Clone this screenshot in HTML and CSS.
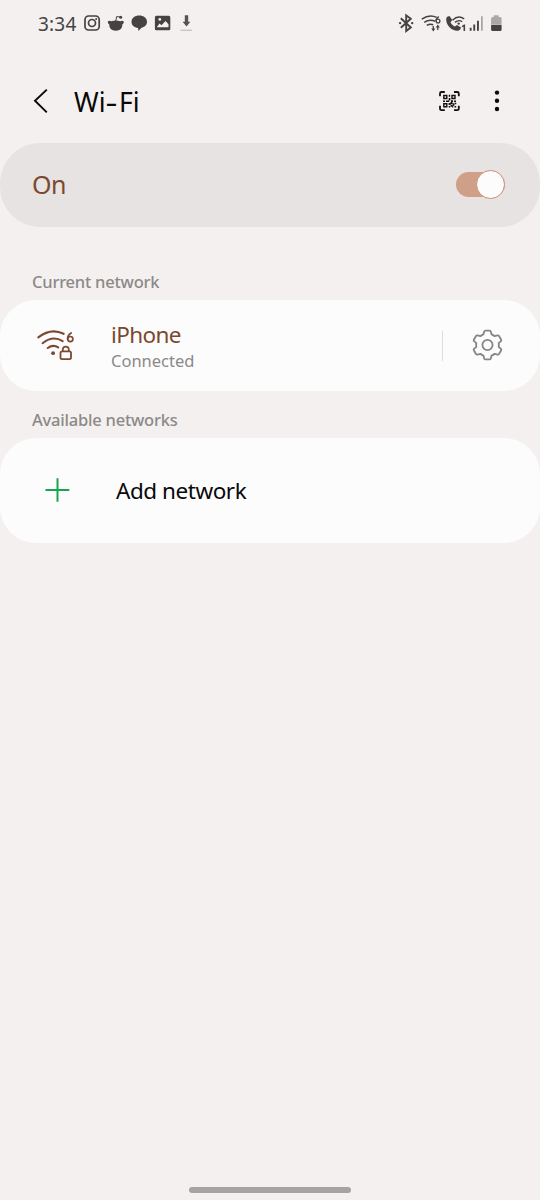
FILE: index.html
```html
<!DOCTYPE html>
<html lang="en">
<head>
<meta charset="utf-8">
<title>Wi-Fi</title>
<link rel="stylesheet" href="styles.css">
</head>
<body>
<div class="screen">
  <div class="status">
    <div class="status-left">
      <span class="clock">3:34</span>
      <svg class="notifications" width="110" height="22" viewBox="82 12 110 22">
        <g fill="none" stroke="#444341" stroke-width="1.7">
          <rect x="85" y="16" width="14.2" height="14" rx="3.6"/>
          <circle cx="92" cy="23" r="3.5"/>
        </g>
        <circle cx="96.2" cy="18.9" r="1" fill="#444341"/>
        <g fill="#444341">
          <path d="M107.8 22.6q-.3-1.8 1.6-1.9 1.2 0 1.9.6 4.5-1.6 9 0 .7-.6 1.9-.6 1.9.1 1.6 1.9-.2 1-1.4 1.6.1 6.5-6.6 6.5t-6.6-6.5q-1.2-.6-1.4-1.6z"/>
          <circle cx="120.7" cy="17.2" r="1.5"/>
          <path d="M115.8 21L116.6 16.6L120.5 17" fill="none" stroke="#444341" stroke-width="1"/>
          <path d="M139.2 15.5c4.5 0 7.8 2.7 7.8 6.3 0 3.3-2.4 5.5-5.8 6.1l-2.7 3-.4-2.9c-4-.3-6.6-2.8-6.6-6.2 0-3.6 3.2-6.3 7.7-6.3z"/>
          <path fill-rule="evenodd" d="M156.4 15.8h12.4a1.5 1.5 0 0 1 1.5 1.5v11.4a1.5 1.5 0 0 1-1.5 1.5h-12.4a1.5 1.5 0 0 1-1.5-1.5V17.3a1.5 1.5 0 0 1 1.5-1.5zM156.8 27.2h11.7v-3l-3-3.2-4 4.2-2-1.8zM159.8 18a1.4 1.4 0 1 0 0 2.8 1.4 1.4 0 0 0 0-2.8z"/>
          <path d="M184.8 15.2h3.4v6.6h2.2l-3.9 4.7-3.9-4.7h2.2z" fill="#555452"/>
          <path d="M180.6 29.6h11.4v1.3h-11.4z" fill="#c5c2c1"/>
        </g>
      </svg>
    </div>
    <svg class="indicators" width="108" height="22" viewBox="396 12 108 22">
      <g fill="none" stroke="#444341" stroke-width="1.9">
        <path d="M400.8 18.3L410.8 27.5L406.2 31V15.3L410.8 18.8L400.8 27.8"/>
        <path d="M421.8 19.2Q429.5 13.8 436.6 17.4M424.2 22.4Q429.8 18.7 435.4 21.4M426.8 25.4Q430 23.4 433.2 24.8" stroke-width="1.6"/>
        <path d="M438.8 16.6Q435.9 18.3 436.1 21M433.3 26v4M437.8 30v-4" stroke-width="1.3"/>
        <circle cx="438" cy="21" r="1.9" stroke-width="1.3"/>
        <path d="M452.5 20.2Q458.3 14.5 464.2 18.9M455 22.4Q458.7 19.2 462.2 21.7" stroke-width="1.4"/>
      </g>
      <g fill="#444341">
        <circle cx="400.1" cy="23.1" r="1.2"/><circle cx="412.2" cy="23.1" r="1.2"/>
        <path d="M431.2 28.4h4.2l-2.1 3zM435.7 27.5h4.2l-2.1-3z"/>
        <path d="M447.2 16.7l2.3-.6 2.8 4-1.8 2.2c1 2 2.5 3.4 4.3 4.3l2.2-1.7 4 2.7c-.3 2-1.6 3.3-3.7 3.2-6.1-.4-10.7-5-11.1-11 0-1.4.3-2.4 1-3.1z"/>
        <circle cx="458.7" cy="23.6" r="1.2"/>
        <path d="M461.9 25.9l2-1.4h1.2v6.4h-1.6V26.6l-1.6.9z"/>
        <path d="M469.7 27.7h1.9v3h-1.9zM473.3 24.5h1.9v6.2h-1.9zM477 20.7h1.9v10H477z"/>
        <path d="M481 16.3h1.8v14.4H481z" fill="#aaa8a6"/>
        <path d="M493.8 15.2h4.8v1.9h1.5q1.5 0 1.5 1.5v5.7h-10.5v-5.7q0-1.5 1.5-1.5h1.2z" fill="#aaa8a6"/>
        <path d="M491.1 24.8h10.5v4.7q0 1.5-1.5 1.5h-7.5q-1.5 0-1.5-1.5z"/>
      </g>
    </svg>
  </div>

  <header class="header">
    <svg class="back" width="20" height="30" viewBox="0 0 20 30"><path d="M14.8 3.6L3 14.8L14.8 26.4" fill="none" stroke="#090909" stroke-width="1.9"/></svg>
    <h1 class="title">Wi<span class="hyphen">-</span>Fi</h1>
    <svg class="qr" width="22" height="22" viewBox="438 89 22 22">
      <g fill="none" stroke="#111">
        <path d="M440 95.2V92.5Q440 91 441.5 91H444.8M454 91h3.3q1.5 0 1.5 1.5v2.7M458.8 104.8v2.9q0 1.5-1.5 1.5H454M444.8 109.2h-3.3q-1.5 0-1.5-1.5v-2.9" stroke-width="1.8"/>
        <path d="M443.8 94.5h3v3h-3zM452 94.5h3v3h-3zM443.8 102.7h3v3h-3z" stroke-width="1.4"/>
      </g>
      <path fill="#111" d="M448.7 93.8h1.5v2h-1.5zM448.7 97h1.7v2.4h-1.7zM443 99.4h2v1.5h-2zM446 99.4h3.2v1.5H446zM451 99.3h2v1.7h-2zM454 99.4h2v1.5h-2zM448.6 102h2v2h-2zM450.5 101h2v2h-2zM452.7 102.2h1.7v2.5h-1.7zM454.8 101.8h1.5v1.5h-1.5zM450.6 103.8h2v2h-2zM448.7 105h1.5v1.5h-1.5zM454.5 105h1.7v1.6h-1.7zM452 105.3h1.3v1.3H452z"/>
    </svg>
    <svg class="more" width="8" height="24" viewBox="0 0 8 24"><g fill="#090909"><circle cx="4" cy="3.6" r="2.2"/><circle cx="4" cy="11.8" r="2.2"/><circle cx="4" cy="20" r="2.2"/></g></svg>
  </header>

  <section class="master">
    <span class="master-label">On</span>
    <span class="switch"><span class="thumb"></span></span>
  </section>

  <h2 class="section current">Current network</h2>
  <section class="card network">
    <svg class="wifi" width="40" height="34" viewBox="36 329 40 34">
      <g fill="none" stroke="#7b4830" stroke-width="2.1" stroke-linecap="round">
        <path d="M38.3 337.4Q51 327.5 63.6 333.8M42.6 343.2Q53 335 62.6 341.2M47.8 348Q53 344 58.2 347.4"/>
        <path d="M71.2 333Q67.6 335.2 67.6 338.8" stroke-width="1.7"/>
        <circle cx="70.3" cy="339.1" r="2.6" stroke-width="1.7"/>
        <rect x="60.5" y="351.3" width="10.5" height="7.9" rx="1.6" stroke-width="1.8"/>
        <path d="M62.8 351v-1.4a3 3 0 0 1 6 0v1.4" stroke-width="1.7"/>
      </g>
      <circle cx="53.1" cy="353.2" r="1.9" fill="#7b4830"/>
    </svg>
    <div class="network-text">
      <div class="name">iPhone</div>
      <div class="state">Connected</div>
    </div>
    <span class="divider"></span>
    <svg class="gear" width="34" height="34" viewBox="-16.5 -16 34 34">
      <g fill="none" stroke="#858585" stroke-width="1.8" stroke-linejoin="round">
        <path d="M-4.1-10.6L-3.3-13.5Q-3-14.4-2-14.4H2Q3-14.4 3.3-13.5L4.1-10.6Q5.7-10 7.1-8.8L10-9.6Q11-9.8 11.5-9L13.7-5.2Q14.1-4.4 13.4-3.8L11.2-1.8Q11.5 0 11.2 1.8L13.4 3.8Q14.1 4.4 13.7 5.2L11.5 9Q11 9.8 10 9.6L7.1 8.8Q5.7 10 4.1 10.6L3.3 13.5Q3 14.4 2 14.4H-2Q-3 14.4-3.3 13.5L-4.1 10.6Q-5.7 10-7.1 8.8L-10 9.6Q-11 9.8-11.5 9L-13.7 5.2Q-14.1 4.4-13.4 3.8L-11.2 1.8Q-11.5 0-11.2-1.8L-13.4-3.8Q-14.1-4.4-13.7-5.2L-11.5-9Q-11-9.8-10-9.6L-7.1-8.8Q-5.7-10-4.1-10.6Z"/>
        <circle r="5.1"/>
      </g>
    </svg>
  </section>

  <h2 class="section available">Available networks</h2>
  <section class="card add">
    <svg class="plus" width="26" height="26" viewBox="0 0 26 26"><path d="M13.5 .2V23.8M1.5 12H25.3" stroke="#18a551" stroke-width="2"/></svg>
    <span class="add-label">Add network</span>
  </section>
  <div class="home-bar"></div>
</div>
</body>
</html>
```

FILE: styles.css
```css
* { box-sizing: border-box; }
body { margin: 0; background: #f4f0ef; }
.screen {
  display: flex;
  flex-direction: column;
  width: 540px;
  height: 1200px;
  overflow: hidden;
  background: #f4f0ef;
  font-family: "Noto Sans", "Open Sans", sans-serif;
  color: #090909;
}
svg { display: block; flex: none; }
h1, h2 { margin: 0; font-weight: 400; }
.status {
  display: flex;
  justify-content: space-between;
  height: 60px;
  padding: 12px 36px 0 38px;
}
.status-left { display: flex; }
.clock {
  width: 44px;
  font-size: 19px;
  line-height: 24px;
  letter-spacing: 0.2px;
  white-space: nowrap;
  color: #444341;
}
.header {
  display: flex;
  align-items: center;
  height: 82px;
  padding: 0 39px 0 32px;
}
.title {
  margin: 1px 0 0 22px;
  font-size: 26.5px;
  line-height: 36px;
  letter-spacing: 0.2px;
}
.hyphen {
  display: inline-block;
  width: 13px;
  transform: translateX(-0.5px) scaleX(1.4);
  transform-origin: left;
}
.qr { margin-left: auto; }
.more { margin-left: 33px; }
.master {
  display: flex;
  align-items: center;
  justify-content: space-between;
  height: 84px;
  margin-top: 0.5px;
  padding: 0 35px 0 32px;
  border-radius: 40px;
  background: #e7e3e2;
}
.master-label {
  margin-top: -1px;
  font-size: 25px;
  line-height: 34px;
  letter-spacing: -0.5px;
  color: #7b4830;
}
.switch {
  display: flex;
  align-items: center;
  justify-content: flex-end;
  width: 49px;
  height: 25px;
  border-radius: 13px;
  background: #d09f87;
}
.thumb {
  flex: none;
  width: 29px;
  height: 29px;
  border: 1.5px solid #c98f77;
  border-radius: 50%;
  background: #fcfcfc;
}
.section {
  flex: none;
  padding-left: 32px;
  font-size: 16.5px;
  font-weight: 500;
  line-height: 24px;
  letter-spacing: -0.22px;
  white-space: nowrap;
  color: #8b8988;
}
.current { margin: 43.5px 0 6px; }
.available { margin: 17px 0 6px; }
.card {
  display: flex;
  flex: none;
  align-items: center;
  border-radius: 36px;
  background: #fcfcfc;
}
.network { height: 91px; padding: 0 35px 0 36px; }
.network-text { flex: none; width: 336px; padding-left: 35px; }
.name {
  font-size: 22.5px;
  line-height: 30px;
  letter-spacing: -0.6px;
  color: #7b4830;
}
.state { font-size: 16.5px; line-height: 22px; color: #8b8988; }
.divider { width: 1px; height: 30px; margin-left: 30px; background: #dedede; }
.gear { margin-left: auto; }
.add { height: 105px; padding: 0 44px; }
.add-label {
  margin-left: 46px;
  font-size: 22.5px;
  line-height: 30px;
  letter-spacing: -0.45px;
}
.home-bar {
  width: 162px;
  height: 6px;
  margin: auto auto 7px;
  border-radius: 3px;
  background: #a6a3a2;
}
```
